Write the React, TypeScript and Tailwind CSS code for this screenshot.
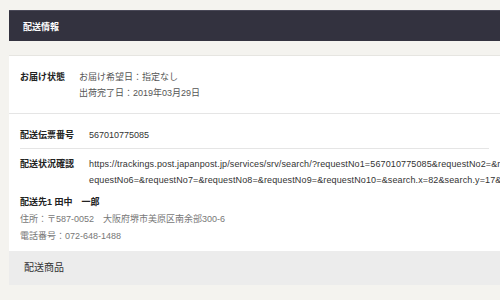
const font = { fontFamily: '"Liberation Sans", "Noto Sans CJK JP", sans-serif' };

function Label({ children }: { children: string }) {
  return <span className="shrink-0 font-bold text-[#222]">{children}</span>;
}

export default function App() {
  return (
    <div className="h-[300px] w-[500px] overflow-hidden bg-[#f4f3ef] pl-[9px] pt-[10px] text-[9px] leading-[16px]" style={font}>
      <div className="flex h-[31px] items-center border-t border-[#4a4958] bg-[#33323f] pl-[14px] pt-[1px] font-bold text-white">
        配送情報
      </div>

      <div className="mt-[14px] border-t border-[#e6e5e1] bg-white">
        <div className="flex gap-[14px] border-b border-[#e5e5e5] px-[11px] pb-[12px] pt-[13px]">
          <Label>お届け状態</Label>
          <div className="text-[#555]">
            <div>お届け希望日：指定なし</div>
            <div>出荷完了日：2019年03月29日</div>
          </div>
        </div>

        <div className="px-[11px] pb-[6px]">
          <div className="flex gap-[15px] border-b border-[#e5e5e5] pb-[5px] pt-[13px]">
            <Label>配送伝票番号</Label>
            <span className="text-[#333]">567010775085</span>
          </div>
          <div className="flex gap-[15px] pt-[7px]">
            <Label>配送状況確認</Label>
            <div className="whitespace-nowrap tracking-[0.13px] text-[#333]">
              <div>https://trackings.post.japanpost.jp/services/srv/search/?requestNo1=567010775085&amp;requestNo2=&amp;requestNo3=&amp;requestNo4=&amp;requestNo5=&amp;r</div>
              <div>equestNo6=&amp;requestNo7=&amp;requestNo8=&amp;requestNo9=&amp;requestNo10=&amp;search.x=82&amp;search.y=17&amp;startingUrlPatten=&amp;locale=ja</div>
            </div>
          </div>
          <div className="mt-[6px] leading-[17px]">
            <div className="font-bold text-[#222]">配送先1 田中　一郎</div>
            <div className="text-[#777]">住所：〒587-0052　大阪府堺市美原区南余部300-6</div>
            <div className="text-[#777]">電話番号：072-648-1488</div>
          </div>
        </div>
      </div>

      <div className="flex h-[34px] items-center bg-[#ececec] pl-[15px] text-[10px] text-[#333]">
        配送商品
      </div>
    </div>
  );
}
